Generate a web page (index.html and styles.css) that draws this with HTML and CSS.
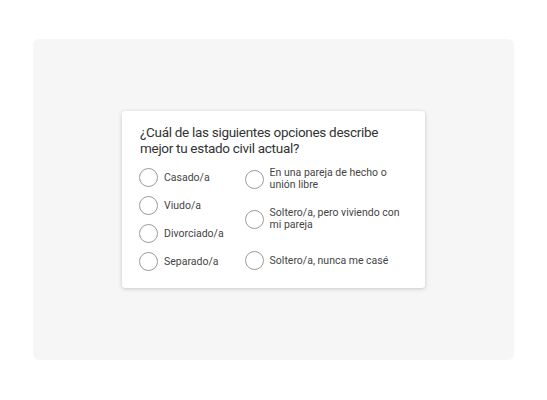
FILE: index.html
```html
<!DOCTYPE html>
<html lang="es">
<head>
<meta charset="utf-8">
<link rel="stylesheet" href="styles.css">
</head>
<body>
<div class="panel">
  <div class="card">
    <div class="question">¿Cuál de las siguientes opciones describe mejor tu estado civil actual?</div>
    <div class="options">
      <div class="col col-left">
        <label class="opt"><span class="radio"></span><span class="txt">Casado/a</span></label>
        <label class="opt"><span class="radio"></span><span class="txt">Viudo/a</span></label>
        <label class="opt"><span class="radio"></span><span class="txt">Divorciado/a</span></label>
        <label class="opt"><span class="radio"></span><span class="txt">Separado/a</span></label>
      </div>
      <div class="col col-right">
        <label class="opt"><span class="radio"></span><span class="txt">En una pareja de hecho o unión libre</span></label>
        <label class="opt"><span class="radio"></span><span class="txt">Soltero/a, pero viviendo con mi pareja</span></label>
        <label class="opt opt-last"><span class="radio"></span><span class="txt">Soltero/a, nunca me casé</span></label>
      </div>
    </div>
  </div>
</div>
</body>
</html>
```
FILE: styles.css
```css
html, body {
  margin: 0;
  padding: 0;
  background: #ffffff;
}
body {
  width: 547px;
  height: 400px;
  padding: 39px 33px 40px 33px;
  box-sizing: border-box;
  font-family: Roboto, "Open Sans", sans-serif;
  color: #333333;
}
.panel {
  width: 481px;
  height: 321px;
  background: #f6f6f6;
  border-radius: 6px;
  display: flex;
  align-items: center;
  justify-content: center;
}
.card {
  width: 303px;
  height: 177px;
  box-sizing: border-box;
  background: #ffffff;
  border-radius: 3px;
  box-shadow: 0 1px 4px rgba(0,0,0,0.18), 0 0 1px rgba(0,0,0,0.08);
  padding: 13px 16px 16px 17px;
}
.question {
  font-size: 13.5px;
  line-height: 16px;
  letter-spacing: -0.3px;
  color: #333333;
  margin-left: 1px;
  width: 250px;
}
.options {
  display: flex;
  margin-top: 12px;
}
.col {
  display: flex;
  flex-direction: column;
}
.col-left {
  width: 106px;
  gap: 9px;
}
.col-right {
  width: 165px;
  gap: 16px;
  margin-top: -1px;
}
.opt {
  display: flex;
  align-items: center;
  gap: 6px;
  font-size: 10.5px;
  line-height: 12px;
  color: #444444;
}
.opt-last {
  margin-top: 4px;
}
.radio {
  flex: none;
  width: 19px;
  height: 19px;
  box-sizing: border-box;
  border: 1px solid #9a9a9a;
  border-radius: 50%;
  background: #ffffff;
}
.txt {
  display: block;
}
.col-right .txt {
  width: 135px;
}
```
